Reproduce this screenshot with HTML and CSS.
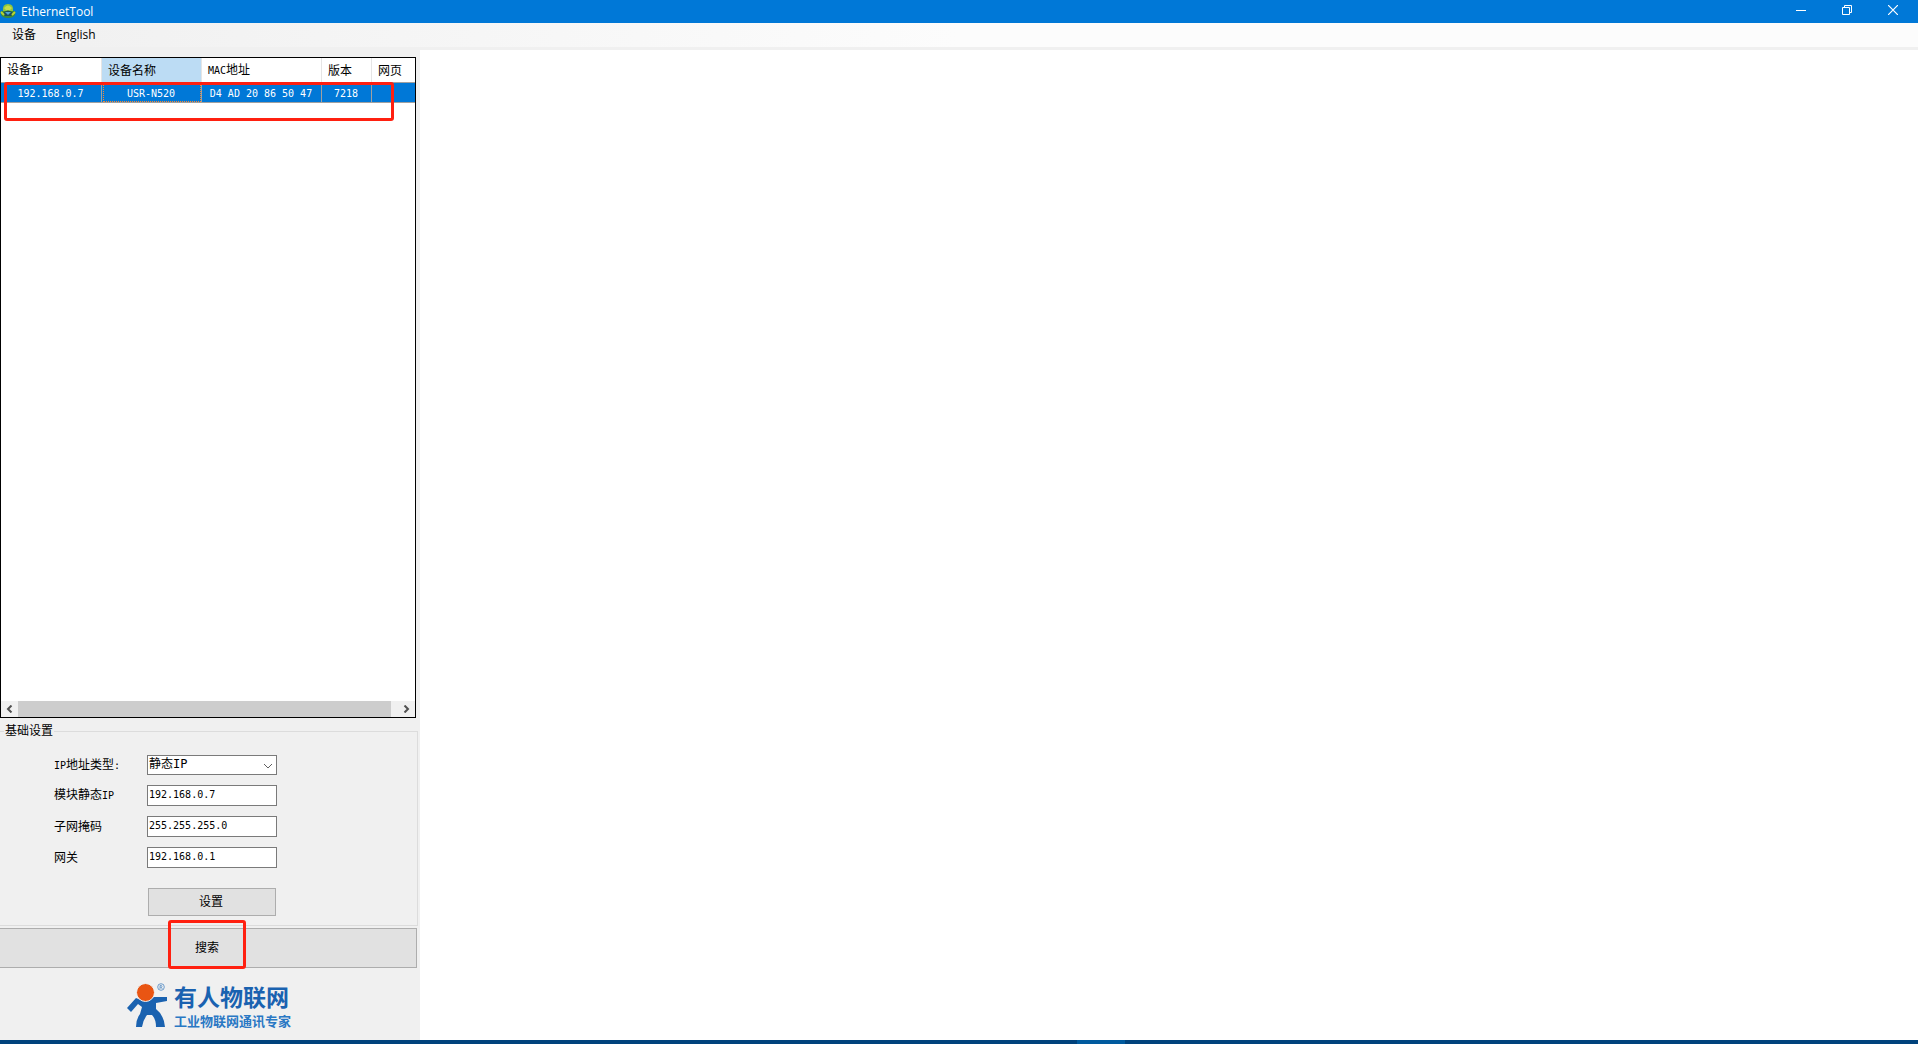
FILE: index.html
```html
<!DOCTYPE html>
<html lang="zh-CN">
<head>
<meta charset="utf-8">
<title>EthernetTool</title>
<link rel="stylesheet" href="styles.css">
</head>
<body>
<header class="titlebar">
  <svg class="app-icon" width="16" height="16" viewBox="0 0 16 16" aria-hidden="true">
    <path d="M1 8Q0 12 3 14Q8 16 13 14Q16 12 15 8Z" fill="#3d8a3a"/>
    <path d="M3 8Q2 1 8 1Q14 1 13 8Z" fill="#8dc63f"/>
    <path d="M4 5Q8 0 12 5L10 7H6Z" fill="#c5dc4c"/>
    <path d="M3 10Q8 5 13 10L11 13H5Z" fill="#1b4f5c"/>
    <path d="M5 9H11L8 12Z" fill="#4fa6d8"/>
    <path d="M1 9L4 12M15 9L12 12" stroke="#b9d532" stroke-width="2"/>
  </svg>
  <h1 class="title">EthernetTool</h1>
  <div class="window-controls">
    <button class="window-button" type="button" aria-label="最小化"><svg width="10" height="10" viewBox="0 0 10 10"><path d="M0 5.500H10" stroke="#fff"/></svg></button>
    <button class="window-button" type="button" aria-label="还原"><svg width="10" height="10" viewBox="0 0 10 10"><path d="M.5 2.500H7.500V9.500H.5ZM2.500 2.500V.5H9.500V7.500H7.500" fill="none" stroke="#fff"/></svg></button>
    <button class="window-button" type="button" aria-label="关闭"><svg width="10" height="10" viewBox="0 0 10 10"><path d="M0 0L10 10M10 0L0 10" stroke="#fff" stroke-width="1.200"/></svg></button>
  </div>
</header>
<nav class="menubar">
  <button class="menu-item" type="button">设备</button>
  <button class="menu-item" type="button">English</button>
</nav>
<div class="client">
  <aside class="panel">
    <section class="device-list">
      <table class="devices">
        <colgroup><col class="col-ip"><col class="col-name"><col class="col-mac"><col class="col-version"><col></colgroup>
        <thead>
          <tr><th>设备<span class="mono">IP</span></th><th class="sorted">设备名称</th><th><span class="mono">MAC</span>地址</th><th>版本</th><th>网页</th></tr>
        </thead>
        <tbody>
          <tr><td>192.168.0.7</td><td class="focused">USR-N520</td><td>D4 AD 20 86 50 47</td><td>7218</td><td></td></tr>
        </tbody>
      </table>
      <div class="scrollbar">
        <button class="scroll-arrow" type="button" aria-label="向左滚动"><svg width="7" height="8" viewBox="0 0 7 8"><path d="M5.500 .5L2 4L5.500 7.500" fill="none" stroke="#505050" stroke-width="2"/></svg></button>
        <div class="scroll-thumb"></div>
        <button class="scroll-arrow" type="button" aria-label="向右滚动"><svg width="7" height="8" viewBox="0 0 7 8"><path d="M1.500 .5L5 4L1.500 7.500" fill="none" stroke="#505050" stroke-width="2"/></svg></button>
      </div>
      <div class="mark mark-row"></div>
    </section>
    <fieldset class="settings">
      <legend>基础设置</legend>
      <div class="fields">
        <label for="ip-type"><span class="mono">IP</span>地址类型<span class="mono">:</span></label>
        <div class="select-wrap">
          <select id="ip-type" class="control"><option>静态IP</option></select>
          <svg class="chevron" width="10" height="6" viewBox="0 0 10 6" aria-hidden="true"><path d="M1 1L5 5L9 1" fill="none" stroke="#606060"/></svg>
        </div>
        <label for="static-ip">模块静态<span class="mono">IP</span></label>
        <input id="static-ip" class="control" type="text" value="192.168.0.7">
        <label for="mask">子网掩码</label>
        <input id="mask" class="control" type="text" value="255.255.255.0">
        <label for="gateway">网关</label>
        <input id="gateway" class="control" type="text" value="192.168.0.1">
      </div>
      <button class="button apply" type="button">设置</button>
    </fieldset>
    <div class="search-row">
      <button class="button search" type="button">搜索</button>
      <div class="mark mark-search"></div>
    </div>
    <div class="brand">
      <svg class="brand-figure" width="42" height="46" viewBox="0 0 42 46" aria-hidden="true">
        <path d="M0 25L9 15Q18 20 27 14L40 14V18L29 20V26Q37 32 38 44H29Q29 36 25 32H20Q16 37 15 44H9Q9 36 13 31L15 24L11 21L4 29Z" fill="#1a62b0"/>
        <circle cx="18.500" cy="9.500" r="9" fill="#e95513" stroke="#f0f0f0"/>
        <circle cx="34" cy="4" r="3.300" fill="none" stroke="#4c86c2" stroke-width=".8"/>
        <path d="M33 6V2.500H34.500Q35.500 3.500 34.500 4.200H33M34.300 4.200L35.300 6" fill="none" stroke="#4c86c2" stroke-width=".7"/>
      </svg>
      <div class="brand-text">
        <strong class="brand-name">有人物联网</strong>
        <span class="brand-tagline">工业物联网通讯专家</span>
      </div>
    </div>
  </aside>
  <main class="workspace"></main>
</div>
<footer class="taskbar"><div class="taskbar-active"></div></footer>
</body>
</html>
```
FILE: styles.css
```css
* { box-sizing: border-box; }

body {
  margin: 0;
  min-height: 100vh;
  display: flex;
  flex-direction: column;
  background: #fff;
  color: #000;
  font: 12px/14px "Liberation Sans", "Noto Sans CJK SC", sans-serif;
}

button, input, select { font: inherit; color: inherit; margin: 0; }

.mono { font-family: "DejaVu Sans Mono", monospace; font-size: 10px; }

.titlebar {
  display: flex;
  align-items: center;
  height: 23px;
  padding-right: 2px;
  background: #0078d7;
  color: #fff;
}
.app-icon { margin-bottom: 2px; }
.title {
  flex: 1;
  margin: 0;
  padding-left: 5px;
  font: 12px/22px "Open Sans", sans-serif;
}
.window-controls { display: flex; align-self: flex-start; }
.window-button {
  width: 46px;
  height: 20px;
  padding: 0;
  border: 0;
  background: none;
  line-height: 0;
}

.menubar {
  display: flex;
  align-items: center;
  gap: 20px;
  height: 27px;
  padding: 0 12px;
  border-bottom: 3px solid #f0f0f0;
  background: linear-gradient(90deg, #f0f0f0, #fcfcfc 50%);
}
.menu-item {
  padding: 0;
  border: 0;
  background: none;
  font: 12px/20px "Open Sans", "Noto Sans CJK SC", sans-serif;
}

.client { flex: 1; display: flex; }
.workspace { flex: 1; background: #fff; }
.panel {
  display: flex;
  flex-direction: column;
  width: 420px;
  padding-top: 7px;
  background: #f0f0f0;
}

.device-list {
  position: relative;
  flex: 1;
  display: flex;
  flex-direction: column;
  justify-content: space-between;
  margin-right: 4px;
  border: 1px solid #000;
  background: #fff;
}
.devices {
  width: 100%;
  table-layout: fixed;
  border-collapse: separate;
  border-spacing: 0;
}
.col-ip { width: 101px; }
.col-name { width: 100px; }
.col-mac { width: 120px; }
.col-version { width: 50px; }
.devices th {
  height: 25px;
  padding: 1px 0 0 6px;
  border-right: 1px solid #e5e5e5;
  border-bottom: 1px solid #a0a0a0;
  font-weight: normal;
  text-align: left;
}
.devices .sorted { background: #bcdcf4; }
.devices td {
  height: 20px;
  padding: 2px 1px 0 0;
  border-right: 1px solid #a0a0a0;
  border-bottom: 1px solid #a0a0a0;
  background: #0078d7;
  color: #fff;
  font: 10px/14px "DejaVu Sans Mono", monospace;
  text-align: center;
}
.devices th:last-child, .devices td:last-child { border-right: 0; }
.devices .focused { outline: 1px dotted #ff8728; outline-offset: -2px; }

.scrollbar { display: flex; height: 16px; background: #f0f0f0; }
.scroll-arrow {
  width: 17px;
  padding: 0;
  border: 0;
  background: none;
  line-height: 0;
}
.scroll-thumb { flex: 1; margin-right: 7px; background: #cdcdcd; }

.mark {
  position: absolute;
  border: 3px solid #ff2010;
  border-radius: 3px;
  pointer-events: none;
}
.mark-row { top: 24px; left: 3px; right: 21px; height: 39px; }
.mark-search { top: -8px; left: 168px; width: 78px; height: 49px; }

.settings {
  min-width: 0;
  height: 202px;
  margin: 6px 2px 0 0;
  padding: 0 0 0 4px;
  border: 1px solid #dcdcdc;
  border-left: 0;
}
.settings legend { height: 14px; padding: 0 1px; }
.fields {
  display: grid;
  grid-template-columns: 93px 130px;
  row-gap: 10px;
  align-items: center;
  margin: 17px 0 0 50px;
}
.control {
  display: block;
  width: 100%;
  height: 21px;
  padding: 0 1px 3px;
  border: 1px solid #7a7a7a;
  border-radius: 0;
  background: #fff;
  font: 10px/14px "DejaVu Sans Mono", "Noto Sans CJK SC", monospace;
}
.select-wrap { position: relative; }
select.control {
  height: 20px;
  padding: 0 1px 2px;
  appearance: none;
  font-size: 12px;
}
.chevron { position: absolute; right: 4px; top: 8px; }

.button {
  display: block;
  padding: 0;
  border: 1px solid #adadad;
  background: #e1e1e1;
}
.apply { width: 128px; height: 28px; margin: 20px 0 0 144px; padding-right: 2px; }

.search-row { position: relative; margin: 2px 3px 0 0; }
.search { width: 100%; height: 40px; border-left: 0; padding-right: 2px; }

.brand {
  display: flex;
  gap: 5px;
  height: 72px;
  padding: 12px 0 0 127px;
}
.brand-figure { margin-top: 3px; }
.brand-text { display: flex; flex-direction: column; white-space: nowrap; }
.brand-name {
  color: #1a62b0;
  font: bold 23px/32px "Noto Sans CJK SC", sans-serif;
}
.brand-tagline {
  color: #2a78c4;
  font: bold 13px/18px "Noto Sans CJK SC", sans-serif;
}

.taskbar { display: flex; height: 4px; padding-left: 1077px; background: #00427c; }
.taskbar-active { width: 48px; background: #005a9e; }
```
